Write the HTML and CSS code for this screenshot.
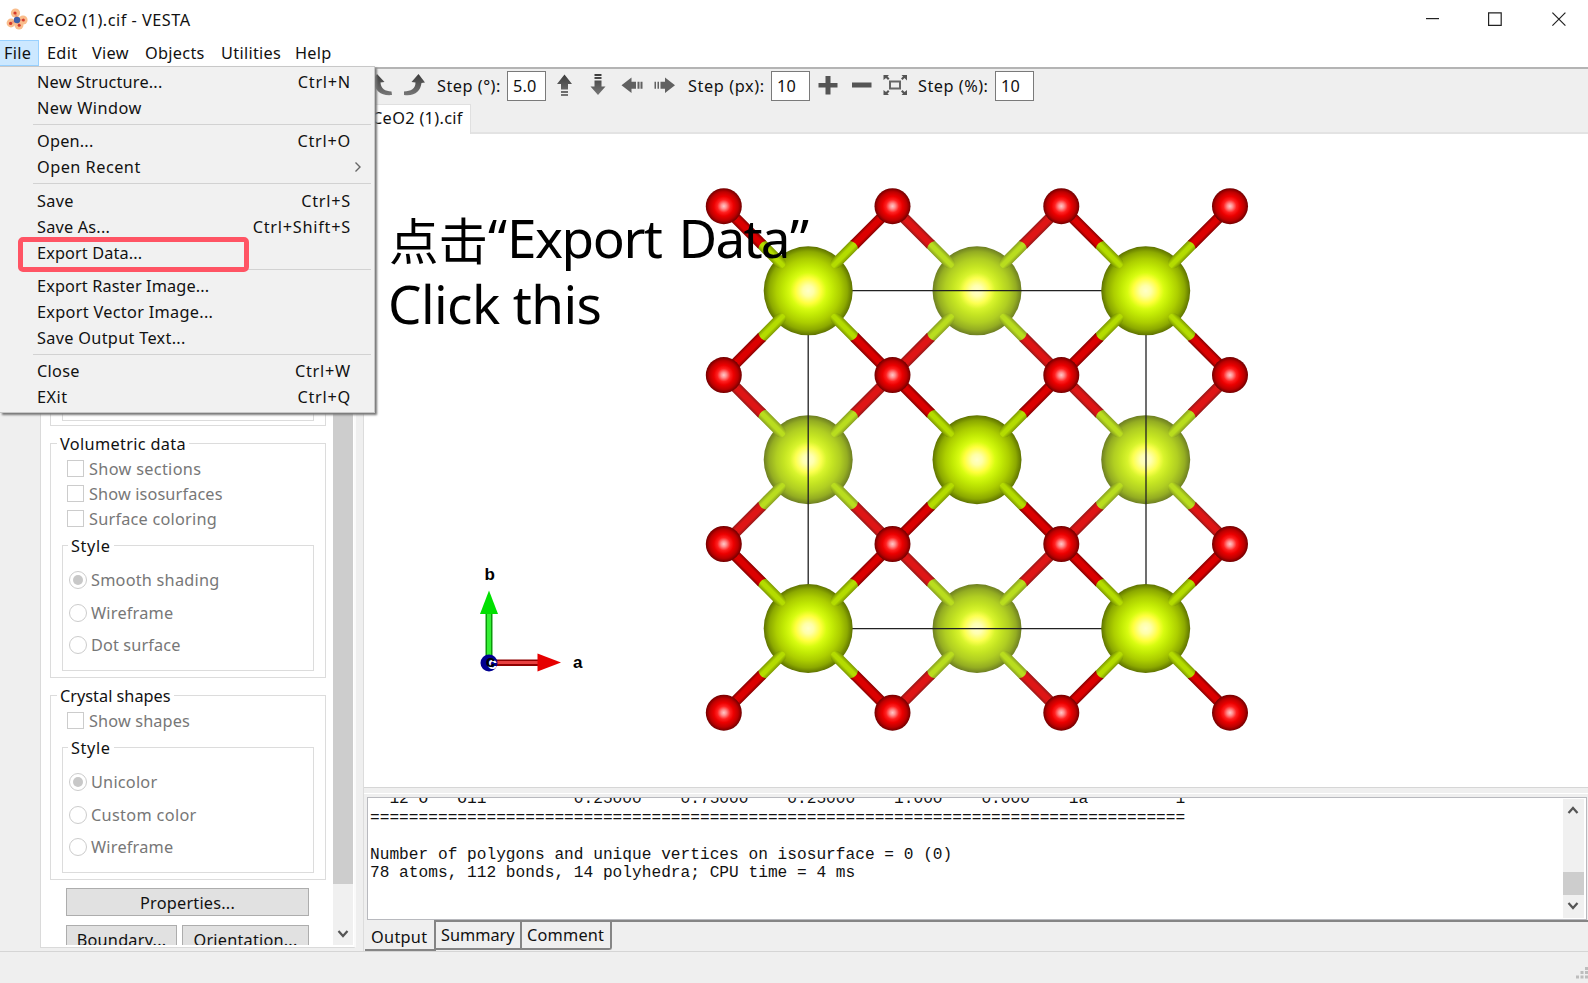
FILE: index.html
```html
<!DOCTYPE html>
<html lang="en">
<head>
<meta charset="utf-8">
<title>CeO2 (1).cif - VESTA</title>
<link rel="stylesheet" href="styles.css">
</head>
<body>
<header class="titlebar">
  <svg class="app-icon" width="22" height="22" viewBox="0 0 22 22">
    <g fill="#f9bd8c"><circle cx="9.5" cy="5" r="4.6"/><circle cx="5" cy="15" r="4.4"/><circle cx="17" cy="12" r="4.6"/><circle cx="13" cy="17" r="4.5"/></g>
    <path d="M9.5 5L11 12L5 15M11 12L17 12M11 12L13 17" stroke="#f39a78" stroke-width="2" fill="none"/>
    <circle cx="11" cy="12" r="3.2" fill="#3f5fa8"/>
    <g fill="#d33a2c"><circle cx="9" cy="5" r="1.6"/><circle cx="4.6" cy="15.4" r="1.6"/><circle cx="17.4" cy="12" r="1.5"/><circle cx="13.2" cy="17.3" r="1.5"/></g>
  </svg>
  <span class="title">CeO2 (1).cif - VESTA</span>
  <svg class="window-buttons" width="160" height="40" viewBox="1420 0 160 40" fill="none" stroke="#222" stroke-width="1.2">
    <path d="M1426 18.6h13"/><path d="M1488.6 12.8h12.6v12.6h-12.6z"/><path d="M1552.4 12.6l13 13m0-13l-13 13"/>
  </svg>
</header>
<nav class="menubar">
  <span class="m-file">File</span><span class="m-edit">Edit</span><span class="m-view">View</span><span class="m-objects">Objects</span><span class="m-util">Utilities</span><span class="m-help">Help</span>
</nav>
<div class="toolbar">
  <svg class="rot" width="57" height="30" viewBox="370 71 57 30">
    <defs><linearGradient id="ig" x1="0" y1="0" x2="0" y2="1"><stop offset="0" stop-color="#3c3c3c"/><stop offset="1" stop-color="#777"/></linearGradient></defs>
    <path fill="url(#ig)" d="M377 74L370.500 83L374.500 83C375 91 381 96 392 95L391.500 91.500C385 91 381 89 380.500 82.500L384.500 82Z"/>
    <path fill="url(#ig)" d="M418.500 74L425 82.500L421.500 83C420.500 91 415 96.500 404 95L404 91.500C411 91 415.500 89 415.500 82.500L411.500 82Z"/>
  </svg>
  <span class="tool-label l-deg">Step (°):</span><span class="field f-deg">5.0</span>
  <svg class="arrows" width="132" height="30" viewBox="550 71 132 30" fill="url(#ig)">
    <path d="M564.500 74.500l7.500 9.500h-4v5.500h-7v-5.500h-4zM561 91h7v2h-7zM561 94h7v2h-7z"/>
    <path d="M598 95l7.500-8.500h-4v-6h-7v6h-4zM594.500 74h7v2h-7zM594.500 77h7v2h-7z"/>
    <path fill="#616161" d="M621.500 85.300l10-7.800v4.300h4.500v7h-4.500v4.300zM637.500 81.800h2v7h-2zM640.500 81.800h2v7h-2z"/>
    <path fill="#616161" d="M675 85.300l-10-7.800v4.300h-4.500v7h4.500v4.300zM654.500 81.800h1.500v7h-1.500zM657.500 81.800h1.500v7h-1.500z"/>
  </svg>
  <span class="tool-label l-px">Step (px):</span><span class="field f-px">10</span>
  <svg class="zooms" width="92" height="30" viewBox="817 71 92 30" fill="#555">
    <path d="M825.500 76h5v7h7v4.500h-7v7h-5v-7h-7v-4.500h7zM852 82.500h19.500v5h-19.500z"/>
    <path fill="none" stroke="#666" stroke-width="2" d="M890 81.500h10v7h-10z"/>
    <path d="M883.500 75h5.500l-1.500 1.500 2 2-1.500 1.500-2-2-2.500 2zM901.500 75h5.500v5.500l-2.500-2.500-2 2-1.500-1.500 2-2zM883.500 95v-5l2.500 2 2-2 1.500 1.500-2 2 1.500 1.500zM901.500 95l1.500-1.500-2-2 1.500-1.500 2 2 2.500-2v5z"/>
  </svg>
  <span class="tool-label l-pct">Step (%):</span><span class="field f-pct">10</span>
</div>
<div class="filetabs"><span class="filetab"><span>CeO2 (1).cif</span></span></div>
<main class="workspace">
  <aside class="side">
    <div class="panel">
      <div class="panel-content">
        <div class="group g-prev"><div class="subgroup"></div></div>
        <div class="group g-vol"><span class="legend lg-vol">Volumetric data</span>
          <label class="check"><i></i><span class="t-sec">Show sections</span></label>
          <label class="check"><i></i><span class="t-iso">Show isosurfaces</span></label>
          <label class="check"><i></i><span class="t-col">Surface coloring</span></label>
          <div class="subgroup"><span class="legend lg-style">Style</span>
            <label class="radio on"><i></i><span class="t-col">Smooth shading</span></label>
            <label class="radio"><i></i><span class="t-col">Wireframe</span></label>
            <label class="radio"><i></i><span class="t-iso">Dot surface</span></label>
          </div>
        </div>
        <div class="group g-cry"><span class="legend lg-cry">Crystal shapes</span>
          <label class="check"><i></i><span class="t-iso">Show shapes</span></label>
          <div class="subgroup"><span class="legend lg-style">Style</span>
            <label class="radio on"><i></i><span class="t-col">Unicolor</span></label>
            <label class="radio"><i></i><span class="t-sec">Custom color</span></label>
            <label class="radio"><i></i><span class="t-col">Wireframe</span></label>
          </div>
        </div>
        <div class="buttons">
          <div class="btn wide">Properties...</div>
          <div class="btn">Boundary...</div>
          <div class="btn">Orientation...</div>
        </div>
      </div>
      <div class="scroll"><div class="thumb"></div>
        <svg width="20" height="62" viewBox="0 0 20 62"><path d="M5.500 47l4.500 5 4.500-5" fill="none" stroke="#555" stroke-width="2.200"/></svg>
      </div>
    </div>
  </aside>
  <section class="right">
    <div class="canvas">
      <svg width="1224" height="653" viewBox="364 134 1224 653">
        <defs>
          <radialGradient id="ceF"><stop offset="0" stop-color="#ffffc8"/><stop offset=".12" stop-color="#ffffa8"/><stop offset=".29" stop-color="#ffff3c"/><stop offset=".41" stop-color="#d8fc10"/><stop offset=".55" stop-color="#c2ea04"/><stop offset=".72" stop-color="#acce00"/><stop offset=".88" stop-color="#8ca900"/><stop offset="1" stop-color="#5e7200"/></radialGradient>
          <radialGradient id="ceB"><stop offset="0" stop-color="#ffffca"/><stop offset=".12" stop-color="#ffffb0"/><stop offset=".29" stop-color="#fcff50"/><stop offset=".41" stop-color="#d8f42c"/><stop offset=".55" stop-color="#c4e422"/><stop offset=".72" stop-color="#b0ce22"/><stop offset=".88" stop-color="#94ad22"/><stop offset="1" stop-color="#6d7e22"/></radialGradient>
          <radialGradient id="ox"><stop offset="0" stop-color="#ffc8c8"/><stop offset=".15" stop-color="#ff9090"/><stop offset=".36" stop-color="#ff2020"/><stop offset=".55" stop-color="#ec0000"/><stop offset=".8" stop-color="#bc0000"/><stop offset="1" stop-color="#700000"/></radialGradient>
          <linearGradient id="gF" x1="0" y1="0" x2="0" y2="1"><stop offset="0" stop-color="#7b9600"/><stop offset=".35" stop-color="#b4dc00"/><stop offset=".65" stop-color="#b4dc00"/><stop offset="1" stop-color="#7b9600"/></linearGradient>
          <linearGradient id="rF" x1="0" y1="0" x2="0" y2="1"><stop offset="0" stop-color="#850000"/><stop offset=".3" stop-color="#dc0000"/><stop offset=".7" stop-color="#dc0000"/><stop offset="1" stop-color="#850000"/></linearGradient>
          <linearGradient id="gB" x1="0" y1="0" x2="0" y2="1"><stop offset="0" stop-color="#879e20"/><stop offset=".35" stop-color="#b9dd1e"/><stop offset=".65" stop-color="#b9dd1e"/><stop offset="1" stop-color="#879e20"/></linearGradient>
          <linearGradient id="rB" x1="0" y1="0" x2="0" y2="1"><stop offset="0" stop-color="#951818"/><stop offset=".3" stop-color="#df1515"/><stop offset=".7" stop-color="#df1515"/><stop offset="1" stop-color="#951818"/></linearGradient>
          <g id="bondF"><rect x="34" y="-5.500" width="37" height="11" rx="5.500" fill="url(#gF)"/><path d="M65-5.500h52v11h-52q4-5.500 0-11z" fill="url(#rF)"/></g>
          <g id="bondB"><rect x="34" y="-5.500" width="37" height="11" rx="5.500" fill="url(#gB)"/><path d="M65-5.500h52v11h-52q4-5.500 0-11z" fill="url(#rB)"/></g>
          <g id="front"><circle r="44.500" fill="url(#ceF)"/><use href="#bondF" transform="rotate(45)"/><use href="#bondF" transform="rotate(135)"/><use href="#bondF" transform="rotate(225)"/><use href="#bondF" transform="rotate(315)"/></g>
          <g id="back"><circle r="44.500" fill="url(#ceB)"/><use href="#bondB" transform="rotate(45)"/><use href="#bondB" transform="rotate(135)"/><use href="#bondB" transform="rotate(225)"/><use href="#bondB" transform="rotate(315)"/></g>
          <circle id="o" r="18" fill="url(#ox)"/>
        </defs>
        <use href="#back" x="977" y="290.800"/><use href="#back" x="808.200" y="459.700"/><use href="#back" x="1145.700" y="459.700"/><use href="#back" x="977" y="628.500"/>
        <path d="M808 290.700H1146M808 628.600H1146" stroke="#222" stroke-width="1.300"/>
        <path d="M808.200 291V628M1146 291V628" stroke="#222" stroke-width="1.300"/>
        <use href="#front" x="808.200" y="290.800"/><use href="#front" x="1145.700" y="290.800"/><use href="#front" x="977" y="459.700"/><use href="#front" x="808.200" y="628.500"/><use href="#front" x="1145.700" y="628.500"/>
        <g id="row"><use href="#o" x="723.800" y="206.200"/><use href="#o" x="892.500" y="206.200"/><use href="#o" x="1061.300" y="206.200"/><use href="#o" x="1230" y="206.200"/></g>
        <use href="#row" y="168.900"/><use href="#row" y="337.800"/><use href="#row" y="506.500"/>
        <g class="axes">
          <path d="M489 655V612" stroke="#0a9a0a" stroke-width="7"/><path d="M489 655V612" stroke="#34f034" stroke-width="4"/>
          <path d="M489 590.500l9 23.500h-18z" fill="#00e000"/>
          <path d="M495 662.800h44" stroke="#8f0000" stroke-width="6.500"/><path d="M495 662.600h44" stroke="#e84040" stroke-width="3"/>
          <path d="M561 662.600l-23.500-9v18z" fill="#e60000"/>
          <circle cx="489" cy="663" r="8.500" fill="#000090"/>
          <text x="487.500" y="669" fill="#fff">c</text><text x="485.800" y="667.300">c</text>
          <text x="484.500" y="580">b</text><text x="573" y="668">a</text>
        </g>
        <g class="note">
          <text x="389" y="259.500" class="han" textLength="99" lengthAdjust="spacingAndGlyphs">点击</text>
          <text x="488" y="258.300">“</text>
          <text x="507" y="258.300" textLength="156">Export</text>
          <text x="678.500" y="258.300" textLength="112">Data</text>
          <text x="790" y="258.300">”</text>
          <text x="388" y="324" textLength="214">Click this</text>
        </g>
      </svg>
    </div>
    <div class="output">
      <div class="textbox">
        <pre>  12 O   O11         0.25000    0.75000    0.25000    1.000    0.000    1a         1
====================================================================================

Number of polygons and unique vertices on isosurface = 0 (0)
78 atoms, 112 bonds, 14 polyhedra; CPU time = 4 ms</pre>
        <svg class="vscroll" width="23" height="119" viewBox="0 0 23 119"><path fill="#f0f0f0" d="M0 0h21v119H0z"/><path fill="#cdcdcd" d="M0 73h21v23H0z"/><path d="M5.500 14l4.500-5 4.500 5M5.500 104l4.500 5 4.500-5" fill="none" stroke="#555" stroke-width="2.200"/></svg>
      </div>
      <div class="outtabs"><span class="ot active">Output</span><span class="ot sum">Summary</span><span class="ot com">Comment</span></div>
    </div>
  </section>
</main>
<footer class="status"><svg width="12" height="14" viewBox="0 0 12 14" fill="#bdbdbd"><path d="M9 1h3v3H9zM4.500 5h3v3h-3zM9 5h3v3H9zM0 9.500h3v3H0zM4.500 9.500h3v3h-3zM9 9.500h3v3H9z"/></svg></footer>

<div class="menu">
  <div class="item"><span class="w2">New Structure...</span><span class="key">Ctrl+N</span></div>
  <div class="item"><span class="w5">New Window</span></div>
  <div class="sep"></div>
  <div class="item"><span class="w2">Open...</span><span class="key">Ctrl+O</span></div>
  <div class="item"><span class="w5">Open Recent</span><svg class="sub" width="8" height="12" viewBox="0 0 8 12"><path d="M1.500 1.500l4.500 4.500-4.500 4.500" fill="none" stroke="#666" stroke-width="1.400"/></svg></div>
  <div class="sep"></div>
  <div class="item"><span class="w3">Save</span><span class="key">Ctrl+S</span></div>
  <div class="item"><span class="w2">Save As...</span><span class="key">Ctrl+Shift+S</span></div>
  <div class="item"><span class="w1">Export Data...</span><div class="highlight"></div></div>
  <div class="sep"></div>
  <div class="item"><span class="w1">Export Raster Image...</span></div>
  <div class="item"><span class="w3">Export Vector Image...</span></div>
  <div class="item"><span class="w3">Save Output Text...</span></div>
  <div class="sep"></div>
  <div class="item"><span class="w3">Close</span><span class="key">Ctrl+W</span></div>
  <div class="item"><span class="w5">EXit</span><span class="key">Ctrl+Q</span></div>
</div>
</body>
</html>
```
FILE: styles.css
```css
* { box-sizing: border-box; }
body { margin: 0; width: 1588px; height: 983px; overflow: hidden; position: relative; display: flex; flex-direction: column; background: #efefef; color: #111; font: 16.3px/20px "Noto Sans", "Open Sans", sans-serif; white-space: nowrap; }
svg { display: block; flex: none; }
.titlebar { height: 40px; background: #fff; display: flex; align-items: center; padding: 0 8px 0 6px; }
.app-icon { margin-top: -2px; }
.title { margin-left: 6px; font-size: 16.3px; letter-spacing: .5px; }
.window-buttons { margin-left: auto; }
.menubar { height: 29px; background: #fff; border-bottom: 2px solid #b4b4b4; display: flex; align-items: flex-start; letter-spacing: .3px; }
.menubar span { height: 26px; line-height: 27px; }
.menubar .m-file { width: 39px; padding-left: 4px; background: #cce8ff; border: 1px solid #99d1ff; border-left: 0; line-height: 25px; }
.m-edit { width: 53px; padding-left: 8px; }
.m-view { width: 53px; }
.m-objects { width: 76px; }
.m-util { width: 74px; }
.toolbar { height: 35px; padding-left: 370px; display: flex; align-items: center; }
.toolbar > * { margin-top: -1px; flex: none; }
.tool-label { margin-left: 10px; letter-spacing: .5px; }
.l-deg { width: 70px; } .l-px { width: 83px; margin-left: 6px; letter-spacing: .6px; } .l-pct { width: 77px; margin-left: 9px; }
.field { width: 39px; height: 30px; border: 1px solid #7a7a7a; background: #fff; padding-left: 5px; line-height: 28px; letter-spacing: .2px; }
.arrows { margin-left: 4px; } .zooms { margin-left: 7px; }
.filetabs { height: 30px; padding-left: 364px; border-bottom: 2px solid #e3e3e3; display: flex; letter-spacing: .33px; }
.filetab { width: 107px; height: 30px; background: #fff; border: 1px solid #e0e0e0; border-width: 1px 1px 0 0; padding: 3px 0 0 8px; }
.workspace { height: 817px; display: flex; }
.side { width: 363px; padding: 0 7px 3px 40px; }
.panel { height: 814px; border: 1px solid #dadada; border-right: 2px solid #fafafa; background: #fff; display: flex; padding-bottom: 2px; }
.panel-content { width: 292px; overflow: hidden; padding-left: 9px; }
.group { width: 276px; border: 1px solid #dcdcdc; position: relative; padding-left: 11px; }
.subgroup { width: 252px; height: 126px; border: 1px solid #dcdcdc; position: relative; padding: 18px 0 0 6px; }
.g-prev { height: 291px; } .g-prev .subgroup { height: 285px; }
.g-vol { margin-top: 17px; height: 235px; padding-top: 12px; }
.g-cry { margin-top: 17px; height: 185px; padding-top: 12px; }
.legend { position: absolute; left: 6px; top: -10px; padding: 0 3px; background: #fff; }
.lg-vol { letter-spacing: .33px; }
.lg-style { left: 5px; letter-spacing: .6px; }
.t-sec { letter-spacing: .32px; } .t-iso { letter-spacing: .13px; } .t-col { letter-spacing: .22px; }
.check { display: flex; height: 25px; align-items: center; margin-left: 5px; color: #777; }
.check i { width: 17px; height: 17px; border: 1px solid #ccc; margin-right: 5px; }
.group > .subgroup { margin-top: 14px; }
.g-prev > .subgroup { margin-top: 0; }
.radio { display: flex; height: 32.400px; align-items: center; color: #777; }
.radio i { width: 18px; height: 18px; border: 1px solid #ccc; border-radius: 50%; margin-right: 4px; padding: 3px; }
.radio.on i::before { content: ""; display: block; width: 10px; height: 10px; border-radius: 50%; background: #c8c8c8; }
.buttons { display: grid; grid-template-columns: 111px 127px; gap: 9px 5px; padding: 8px 0 0 16px; }
.btn { height: 28px; border: 1px solid #adadad; background: #e1e1e1; text-align: center; line-height: 28px; letter-spacing: .22px; }
.wide { grid-column: 1 / 3; }
.scroll { width: 20px; background: #f0f0f0; }
.thumb { height: 749px; background: #cdcdcd; }
.right { width: 1225px; border-left: 1px solid #dcdcdc; }
.canvas { height: 654px; background: #fff; border-bottom: 1px solid #d6d6d6; }
.axes { font: bold 17px "Liberation Sans", Arial, sans-serif; }
.note { font: 53px "Noto Sans", sans-serif; fill: #000; }
.han { font: 50px "Noto Sans CJK SC", sans-serif; }
.output { margin-top: 5px; height: 158px; border-top: 1px solid #fff; padding-top: 3px; }
.textbox { margin-left: 3px; width: 1220px; height: 123px; background: #fff; border: 1px solid #b8b9be; padding: 1px 0 1px 2px; display: flex; justify-content: space-between; overflow: hidden; }
.textbox pre { margin: -9px 0 0; font: 16.18px/18.5px "Liberation Mono", "Courier New", monospace; }
.outtabs { display: flex; margin-left: 1px; border-top: 2px solid #858585; height: 32px; align-items: flex-start; }
.ot { height: 28px; border: 2px solid #858585; border-width: 0 2px 2px 0; padding: 3px 0 0 5px; width: 86px; }
.ot.com { width: 90px; border-radius: 0 0 3px 0; letter-spacing: .2px; }
.ot.active { width: 71px; height: 31px; margin-top: -2px; background: #efefef; padding: 7px 0 0 6px; letter-spacing: .3px; }
.status { height: 32px; border-top: 1px solid #d5d5d5; display: flex; justify-content: flex-end; align-items: flex-end; padding-bottom: 3px; }
.menu { position: absolute; left: 0; top: 66px; width: 375px; height: 347px; background: #f1f1f1; border: 1px solid #c8c8c8; border-left: 0; box-shadow: 2px 2px 2px #777; padding: 2px 3px 0 33px; }
.item { position: relative; height: 26px; display: flex; align-items: center; justify-content: space-between; padding: 0 21px 0 4px; }
.w1 { letter-spacing: .12px; } .w2 { letter-spacing: .2px; } .w3 { letter-spacing: .3px; } .w5 { letter-spacing: .48px; }
.key { letter-spacing: .75px; margin-right: -1px; }
.item .sub { margin-right: -12px; }
.sep { height: 1px; margin: 3.150px 0; background: #d2d2d2; }
.highlight { position: absolute; left: -15px; top: -3px; width: 231px; height: 35px; border: 5px solid #ff5464; border-radius: 5px; }
```
